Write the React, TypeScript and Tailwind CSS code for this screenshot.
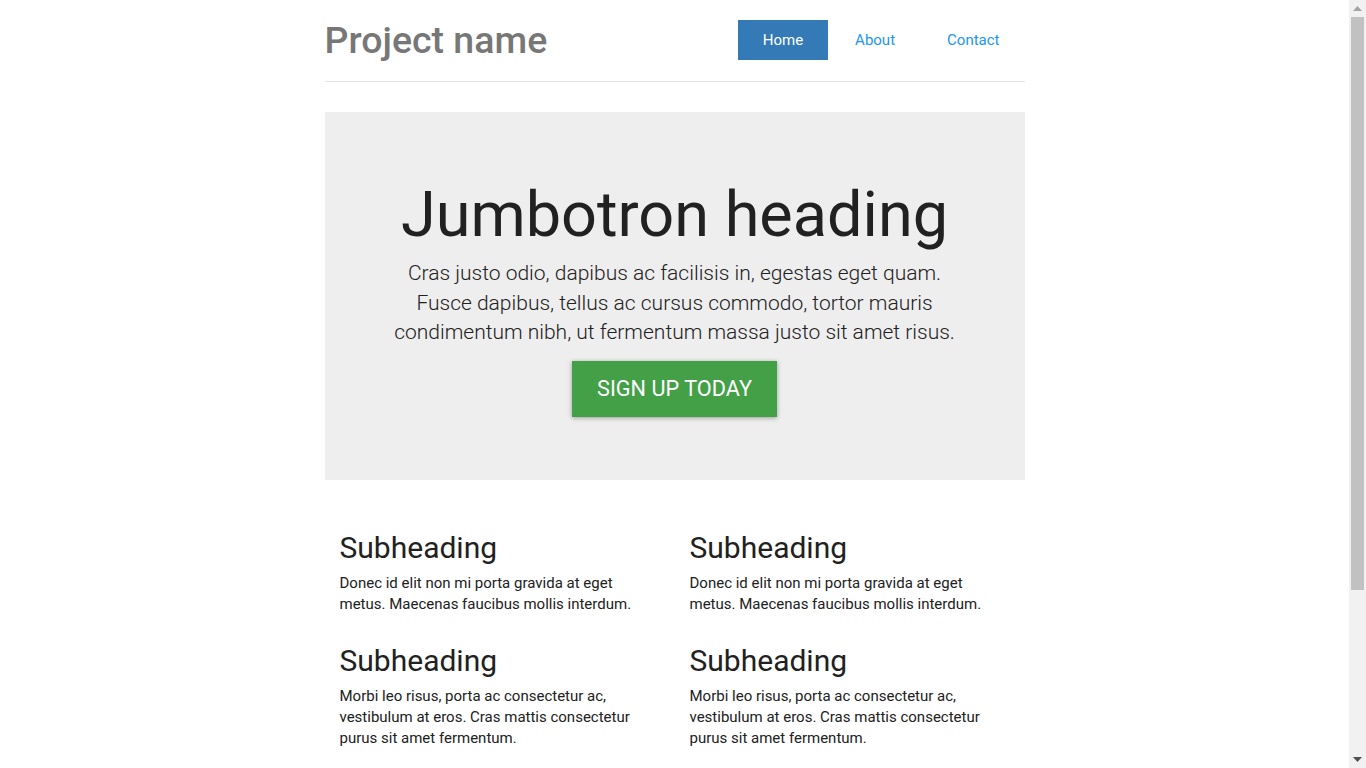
import React from "react";

const font = { fontFamily: "Roboto, 'Noto Sans', Arial, sans-serif" };

function Item({ body }: { body: string }) {
  return (
    <div className="[&+&]:mt-[29px]">
      <h4 className="mt-[11px] mb-[9px] text-[30px] leading-[1.1] font-normal text-[#212121]">Subheading</h4>
      <p className="mb-[10px] text-[15px] leading-[21px] text-[#212121]">{body}</p>
    </div>
  );
}

function FakeScrollbar() {
  return (
    <div className="fixed top-0 right-0 flex h-screen w-[17px] flex-col items-center bg-[#f1f1f1]">
      <div className="flex h-[17px] w-full items-center justify-center">
        <svg width="9" height="5" viewBox="0 0 9 5"><polygon points="4.5,0 9,5 0,5" fill="#a3a3a3" /></svg>
      </div>
      <div className="h-[573px] w-[13px] bg-[#c1c1c1]" />
      <div className="flex-1" />
      <div className="flex h-[17px] w-full items-center justify-center">
        <svg width="9" height="5" viewBox="0 0 9 5"><polygon points="0,0 9,0 4.5,5" fill="#505050" /></svg>
      </div>
    </div>
  );
}

export default function App() {
  const a = "Donec id elit non mi porta gravida at eget metus. Maecenas faucibus mollis interdum.";
  const b = "Morbi leo risus, porta ac consectetur ac, vestibulum at eros. Cras mattis consectetur purus sit amet fermentum.";
  const c = "Maecenas sed diam eget risus varius blandit sit amet non magna.";
  return (
    <div style={font} className="bg-white pr-[17px] text-[#212121]">
      <div className="pt-[20px] pb-[20px]">
        <div className="mx-auto w-[700px]">
          <div className="flex items-start justify-between border-b border-[#e5e5e5] pb-[21px]">
            <h3 className="m-0 text-[37.5px] leading-[40px] font-medium text-[#777777]">Project name</h3>
            <nav className="flex gap-[2px]">
              <a className="flex h-[40px] items-center bg-[#337ab7] px-[25px] text-[15px] text-white">Home</a>
              <a className="flex h-[40px] items-center px-[25px] text-[15px] text-[#2196f3]">About</a>
              <a className="flex h-[40px] items-center px-[25px] text-[15px] text-[#2196f3]">Contact</a>
            </nav>
          </div>

          <div className="mt-[30px] bg-[#eeeeee] px-[60px] pt-[48px] pb-[48px] text-center">
            <h1 className="mt-[20px] mb-[10px] text-[63px] leading-[1.1] font-normal text-[#212121]">Jumbotron heading</h1>
            <p className="mb-[14px] text-[21px] leading-[1.4] font-light text-[#212121]">
              Cras justo odio, dapibus ac facilisis in, egestas eget quam. Fusce dapibus, tellus ac cursus commodo, tortor mauris condimentum nibh, ut fermentum massa justo sit amet risus.
            </p>
            <p className="mb-[15px]">
              <a className="inline-flex h-[56px] items-center bg-[#43a047] px-[25px] text-[21.7px] uppercase text-white shadow-[0_1px_6px_rgba(0,0,0,0.12),0_1px_4px_rgba(0,0,0,0.24)]">
                Sign up today
              </a>
            </p>
          </div>

          <div className="mt-[40px] mb-[40px] grid grid-cols-2">
            <div className="px-[15px]">
              <Item body={a} />
              <Item body={b} />
              <Item body={c} />
            </div>
            <div className="px-[15px]">
              <Item body={a} />
              <Item body={b} />
              <Item body={c} />
            </div>
          </div>

          <footer className="border-t border-[#e5e5e5] pt-[19px] text-[15px] leading-[21px] text-[#212121]">
            <p>© 2016 Company, Inc.</p>
          </footer>
        </div>
      </div>
      <FakeScrollbar />
    </div>
  );
}
